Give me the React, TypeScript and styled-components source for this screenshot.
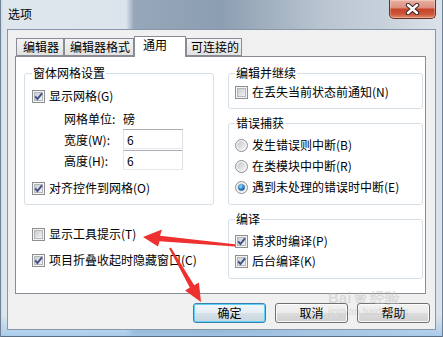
import React from 'react';
import styled, {createGlobalStyle} from 'styled-components';

const GlobalStyle = createGlobalStyle`
    html, body {
        margin: 0;
        padding: 0;
    }

    body {
        width: 443px;
        height: 337px;
        overflow: hidden;
        font-family: 'Noto Sans CJK SC', 'Noto Sans', sans-serif;
        font-size: 12px;
        color: #000;
    }
`;

interface TabDef {
    label: string;
    width: number;
    padLeft: number;
    active?: boolean;
}

const tabs: TabDef[] = [
    {label: '编辑器', width: 48, padLeft: 6},
    {label: '编辑器格式', width: 70, padLeft: 5},
    {label: '通用', width: 52, padLeft: 8, active: true},
    {label: '可连接的', width: 56, padLeft: 4},
];

const CheckBox = ({checked}: {checked?: boolean}) => (
    <Glyph width='13' height='13' viewBox='0 0 13 13'>
        <defs>
            <linearGradient id='cbFill' x1='0' y1='0' x2='1' y2='1'>
                <stop offset='0' stopColor='#c6cad0'/>
                <stop offset='1' stopColor='#f6f6f6'/>
            </linearGradient>
        </defs>
        <rect x='0.5' y='0.5' width='12' height='12' fill='#f4f4f4' stroke='#8e8f8f'/>
        <rect x='2.5' y='2.5' width='8' height='8' fill='url(#cbFill)' stroke='#b4b8bd'/>
        {checked && (
            <path d='M3.2 6.4 L5.4 9 L10 3.3' fill='none' stroke='#3d4e85' strokeWidth='1.9'/>
        )}
    </Glyph>
);

const Radio = ({checked}: {checked?: boolean}) => (
    <Glyph width='13' height='13' viewBox='0 0 13 13'>
        <defs>
            <linearGradient id='rdFill' x1='0' y1='0' x2='1' y2='1'>
                <stop offset='0' stopColor='#c3c7cc'/>
                <stop offset='1' stopColor='#f5f5f5'/>
            </linearGradient>
            <radialGradient id='rdDot' cx='0.4' cy='0.35' r='0.7'>
                <stop offset='0' stopColor='#a6e2ff'/>
                <stop offset='0.5' stopColor='#2f8fd6'/>
                <stop offset='1' stopColor='#164f92'/>
            </radialGradient>
        </defs>
        <circle cx='6.5' cy='6.5' r='6' fill='#f4f4f4' stroke='#8e8f8f'/>
        <circle cx='6.5' cy='6.5' r='4.2' fill='url(#rdFill)'/>
        {checked && <circle cx='6.5' cy='6.5' r='3.3' fill='url(#rdDot)'/>}
    </Glyph>
);

const Check = ({label, checked}: {label: string; checked?: boolean}) => (
    <OptionRow>
        <CheckBox checked={checked}/>
        <span>{label}</span>
    </OptionRow>
);

const Option = ({label, checked}: {label: string; checked?: boolean}) => (
    <OptionRow>
        <Radio checked={checked}/>
        <span>{label}</span>
    </OptionRow>
);

export default function App() {
    return (
        <>
            <GlobalStyle/>
            <Window>
                <TitleBar>
                    <Title>{'选项'}</Title>
                    <CloseButton>
                        <svg width='15' height='12' viewBox='0 0 15 12'>
                            <path d='M3 2 L12 10 M12 2 L3 10' stroke='#3b2a2a' strokeWidth='4.4' strokeLinecap='round'/>
                            <path d='M3 2 L12 10 M12 2 L3 10' stroke='#fff' strokeWidth='2.4' strokeLinecap='round'/>
                        </svg>
                    </CloseButton>
                </TitleBar>
                <Client>
                    <TabRow>
                        {tabs.map((t) => (
                            <Tab key={t.label} $w={t.width} $pl={t.padLeft} $active={t.active}>
                                {t.label}
                            </Tab>
                        ))}
                    </TabRow>
                    <Panel>
                        <Column>
                            <GroupBox $pad='7px 0 6px 7px'>
                                <Legend>{'窗体网格设置'}</Legend>
                                <Check label='显示网格(G)' checked/>
                                <FieldRow $mt={2}>
                                    <FieldLabel>{'网格单位:'}</FieldLabel>
                                    <span>{'磅'}</span>
                                </FieldRow>
                                <FieldRow $mt={1}>
                                    <FieldLabel>{'宽度(W):'}</FieldLabel>
                                    <TextBox readOnly value='6'/>
                                </FieldRow>
                                <FieldRow $mt={1}>
                                    <FieldLabel>{'高度(H):'}</FieldLabel>
                                    <TextBox readOnly value='6'/>
                                </FieldRow>
                                <Spacer $h={8}/>
                                <Check label='对齐控件到网格(O)' checked/>
                            </GroupBox>
                            <LooseOptions>
                                <Check label='显示工具提示(T)'/>
                                <Check label='项目折叠收起时隐藏窗口(C)' checked/>
                            </LooseOptions>
                        </Column>
                        <Column>
                            <GroupBox $pad='3px 0 6px 6px'>
                                <Legend>{'编辑并继续'}</Legend>
                                <Check label='在丢失当前状态前通知(N)'/>
                            </GroupBox>
                            <GroupBox $pad='6px 0 7px 6px' $mt={8} $gap={1}>
                                <Legend>{'错误捕获'}</Legend>
                                <Option label='发生错误则中断(B)'/>
                                <Option label='在类模块中中断(R)'/>
                                <Option label='遇到未处理的错误时中断(E)' checked/>
                            </GroupBox>
                            <GroupBox $pad='6px 0 7px 6px' $mt={8}>
                                <Legend>{'编译'}</Legend>
                                <Check label='请求时编译(P)' checked/>
                                <Check label='后台编译(K)' checked/>
                            </GroupBox>
                        </Column>
                    </Panel>
                    <ButtonRow>
                        <DialogButton $default>{'确定'}</DialogButton>
                        <DialogButton>{'取消'}</DialogButton>
                        <DialogButton>{'帮助'}</DialogButton>
                    </ButtonRow>
                </Client>
                <Watermark>
                    <WatermarkBrand>{'Bai'}<Paw>{'❀'}</Paw>{'经验'}</WatermarkBrand>
                    <WatermarkUrl>{'jingyan.baidu.com'}</WatermarkUrl>
                </Watermark>
                <Arrows width='443' height='337' viewBox='0 0 443 337'>
                    <polygon
                        fill='#ee3030'
                        points='143,237 162,229.5 160,235.8 235,244.3 235,246.6 159.5,241.2 158,246.5'
                    />
                    <polygon
                        fill='#ee3030'
                        points='201,302 185.1,290.4 189.8,287.6 169.1,248.5 170.9,247.5 194.2,285.2 198.9,282.4'
                    />
                </Arrows>
            </Window>
        </>
    );
}

const Window = styled.div`
    position: relative;
    width: 443px;
    height: 337px;
    box-sizing: border-box;
    display: flex;
    flex-direction: column;
    padding: 0 7px 7px 7px;
    background:
        linear-gradient(180deg, rgba(170, 205, 238, 0) 315px, rgba(160, 200, 236, 0.9) 337px),
        linear-gradient(90deg, #cfd9e3 0px, #dfe7ee 4px, #dbe4ec 126px, #95a7b9 134px, #8c9eb1 220px, #a2b1c0 270px, #b8c4d0 320px, #c6d0da 380px, #dce3ea 443px);
    box-shadow: inset 1px 0 0 #6f8196, inset -1px 0 0 #6f8196, inset 0 -1px 0 #5a6e84;
`;

const TitleBar = styled.div`
    height: 29px;
    flex: none;
    display: flex;
    justify-content: space-between;
    align-items: flex-start;
`;

const Title = styled.div`
    padding: 7px 0 0 1px;
    font-size: 12px;
    line-height: 14px;
    color: #000;
`;

const CloseButton = styled.div`
    width: 47px;
    height: 19px;
    box-sizing: border-box;
    display: flex;
    align-items: center;
    justify-content: center;
    border: 1px solid #6b2f27;
    border-top: none;
    border-radius: 0 0 5px 5px;
    background: linear-gradient(180deg, #e9b0a2 0%, #dc8f7f 42%, #c6442c 52%, #cc553a 78%, #e08a68 100%);
    box-shadow: inset 0 0 0 1px rgba(255, 255, 255, 0.3);
`;

const Client = styled.div`
    flex: 1;
    display: flex;
    flex-direction: column;
    box-sizing: border-box;
    padding: 6px 5px 6px 7px;
    background: #f0f0f0;
    border: 1px solid #8797a9;
`;

const TabRow = styled.div`
    height: 20px;
    flex: none;
    display: flex;
    align-items: flex-end;
    margin-left: 1px;
`;

const Tab = styled.div<{$w: number; $pl: number; $active?: boolean}>`
    position: relative;
    z-index: ${(p) => (p.$active ? 1 : 0)};
    width: ${(p) => p.$w}px;
    height: ${(p) => (p.$active ? 21 : 18)}px;
    margin-bottom: ${(p) => (p.$active ? -1 : 0)}px;
    box-sizing: border-box;
    padding: 1px 0 0 ${(p) => p.$pl}px;
    border: 1px solid #898c95;
    border-bottom: ${(p) => (p.$active ? 'none' : '1px solid #898c95')};
    background: ${(p) => (p.$active ? '#fff' : 'linear-gradient(180deg, #f3f3f3 0%, #ebebeb 50%, #e2e2e2 100%)')};
    font-size: 12px;
    line-height: 14px;
    white-space: nowrap;
`;

const Panel = styled.div`
    height: 238px;
    flex: none;
    box-sizing: border-box;
    margin-right: 4px;
    padding: 10px 2px 0 8px;
    display: grid;
    grid-template-columns: 190px 1fr;
    column-gap: 14px;
    align-items: start;
    background: #fff;
    border: 1px solid #898c95;
`;

const Column = styled.div`
    display: flex;
    flex-direction: column;
`;

const GroupBox = styled.fieldset<{$pad: string; $mt?: number; $gap?: number}>`
    margin: ${(p) => p.$mt || 0}px 0 0 0;
    padding: ${(p) => p.$pad};
    min-width: 0;
    display: flex;
    flex-direction: column;
    gap: ${(p) => p.$gap || 0}px;
    border: 1px solid #d5dfe5;
    border-radius: 3px;
`;

const Legend = styled.legend`
    padding: 0 1px;
    font-size: 12px;
    line-height: 12px;
`;

const OptionRow = styled.div`
    height: 20px;
    display: flex;
    align-items: center;
    gap: 4px;
    white-space: nowrap;
    line-height: 14px;
`;

const Glyph = styled.svg`
    flex: none;
    display: block;
`;

const FieldRow = styled.div<{$mt: number}>`
    height: 20px;
    margin-top: ${(p) => p.$mt}px;
    padding-left: 32px;
    display: flex;
    align-items: center;
    white-space: nowrap;
`;

const FieldLabel = styled.span`
    width: 59px;
    flex: none;
`;

const TextBox = styled.input`
    width: 60px;
    height: 20px;
    box-sizing: border-box;
    margin: 0;
    padding: 0 0 0 3px;
    border: 1px solid;
    border-color: #abadb3 #dbdfe6 #e3e9ef #e2e3ea;
    font-family: inherit;
    font-size: 12px;
    color: #000;
    background: #fff;
    outline: none;
`;

const Spacer = styled.div<{$h: number}>`
    height: ${(p) => p.$h}px;
    flex: none;
`;

const LooseOptions = styled.div`
    margin-top: 19px;
    display: flex;
    flex-direction: column;
    gap: 6px;
    padding-left: 8px;
`;

const ButtonRow = styled.div`
    margin-top: 9px;
    display: flex;
    justify-content: flex-end;
    gap: 9px;
`;

const DialogButton = styled.button<{$default?: boolean}>`
    width: 73px;
    height: 20px;
    margin: 0;
    padding: 0;
    box-sizing: border-box;
    border: 1px solid ${(p) => (p.$default ? '#3c7fb1' : '#707070')};
    border-radius: 3px;
    background: ${(p) => (p.$default
        ? 'linear-gradient(180deg, #f0f6fa 0%, #e6eef3 50%, #d6e0e8 50%, #c8d6e0 100%)'
        : 'linear-gradient(180deg, #f2f2f2 0%, #ebebeb 50%, #dddddd 50%, #cfcfcf 100%)')};
    box-shadow: inset 0 0 0 1px ${(p) => (p.$default ? '#5fd0f7' : '#fbfbfb')};
    font-family: inherit;
    font-size: 12px;
    line-height: 14px;
    color: #000;
`;

const Watermark = styled.div`
    position: absolute;
    left: 328px;
    top: 289px;
    display: flex;
    flex-direction: column;
    pointer-events: none;
    color: rgba(190, 190, 190, 0.45);
`;

const WatermarkBrand = styled.div`
    display: flex;
    align-items: center;
    font-family: 'Liberation Sans', sans-serif;
    font-weight: bold;
    font-size: 15px;
    line-height: 17px;
`;

const Paw = styled.span`
    margin: 0 3px;
    font-size: 15px;
`;

const WatermarkUrl = styled.div`
    font-family: 'Liberation Sans', sans-serif;
    font-size: 10px;
    line-height: 12px;
`;

const Arrows = styled.svg`
    position: absolute;
    left: 0;
    top: 0;
    pointer-events: none;
`;
